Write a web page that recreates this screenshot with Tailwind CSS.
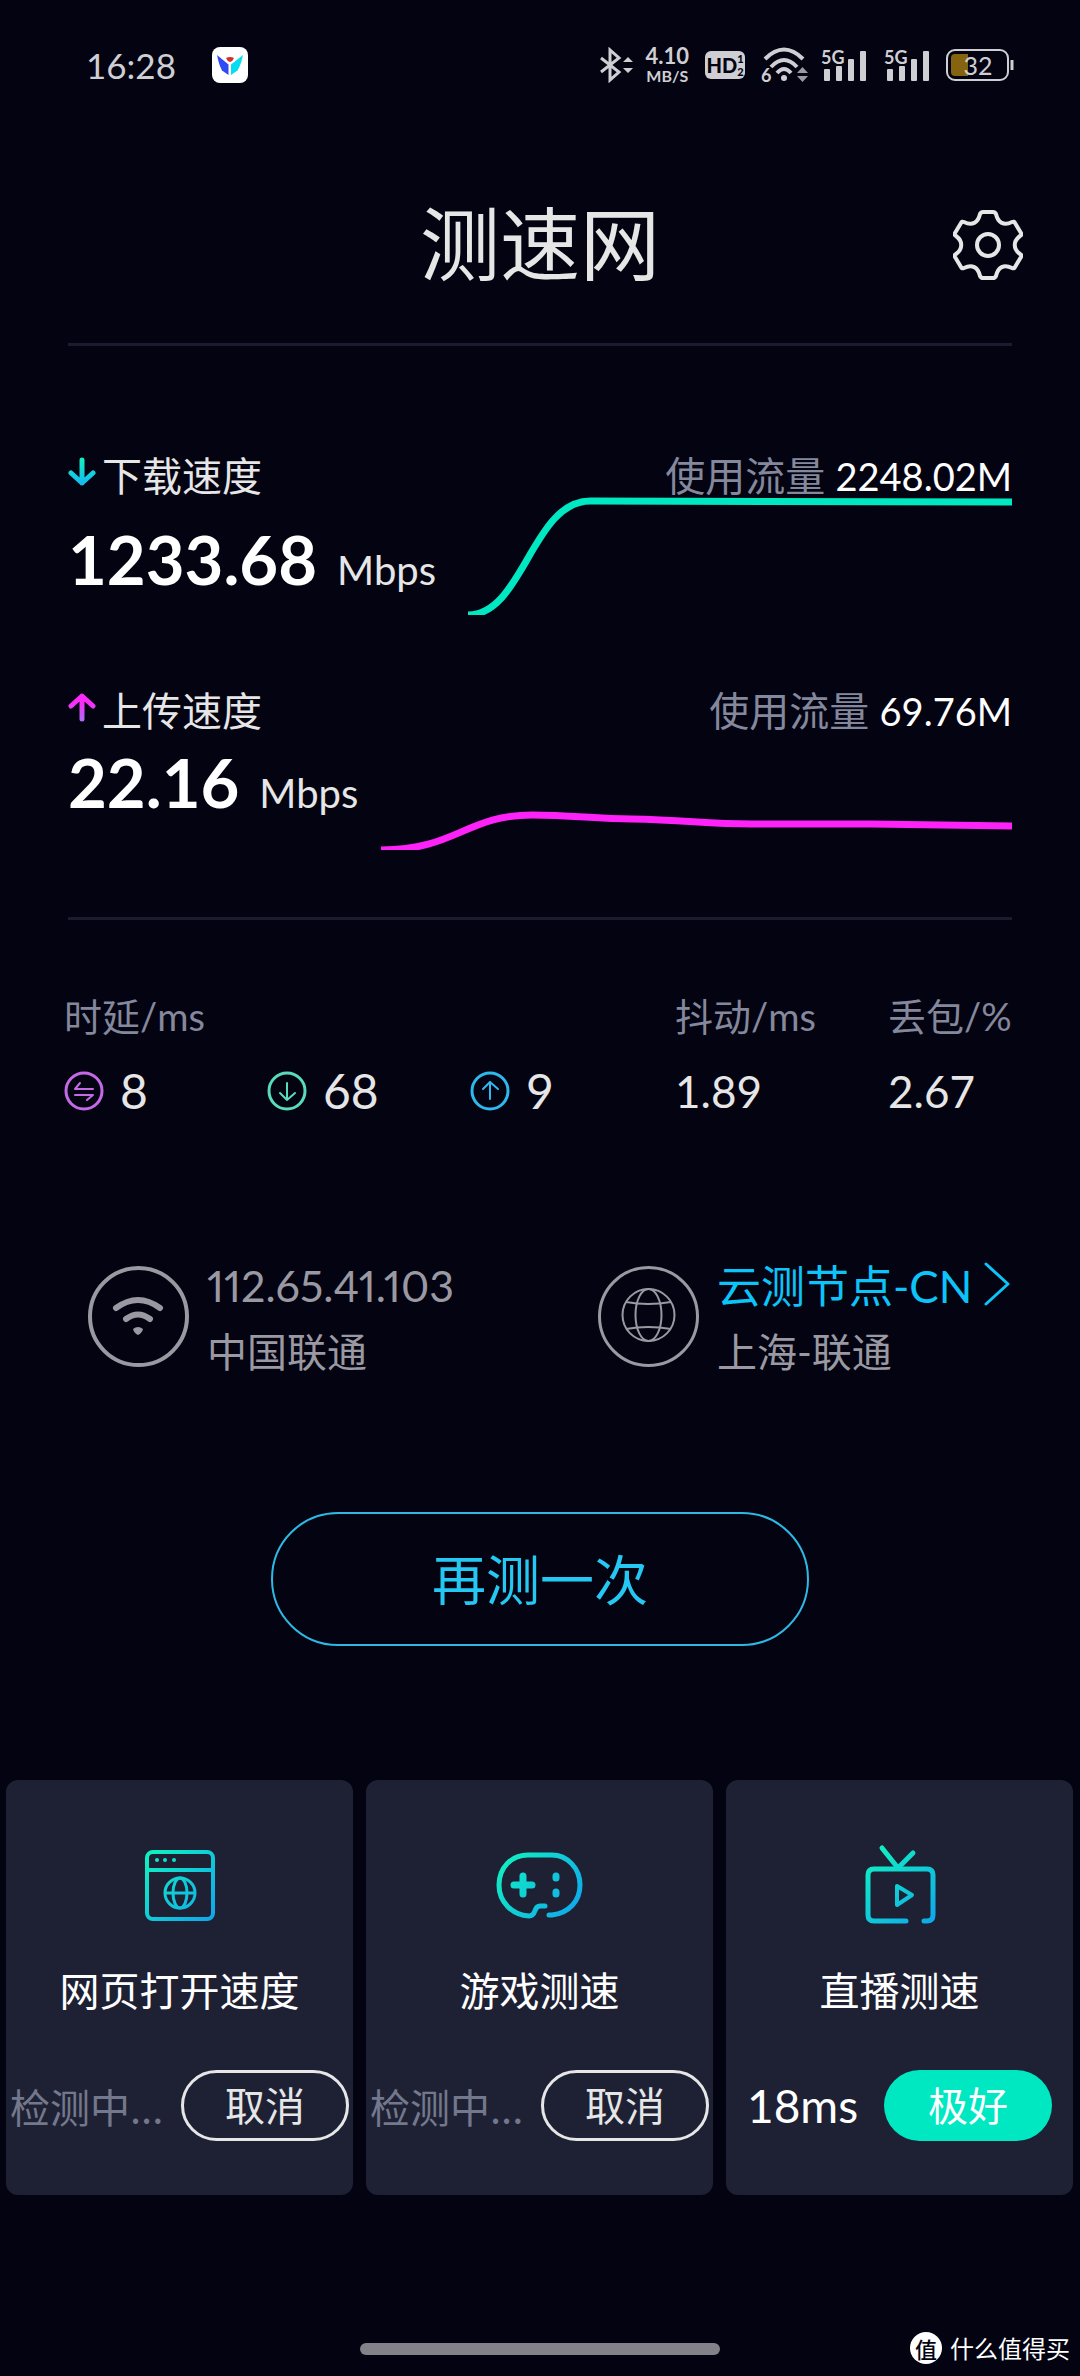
<!DOCTYPE html>
<html lang="zh-CN">
<head>
<meta charset="utf-8">
<meta name="viewport" content="width=device-width, initial-scale=1">
<title>测速网</title>
<script src="https://cdn.jsdelivr.net/npm/@tailwindcss/browser@4"></script>
</head>
<body class="relative min-h-screen bg-[#030312] font-['Lato','Noto_Sans_CJK_SC',sans-serif] text-[#e6e6e6]">

<!-- Status bar -->
<div class="flex h-[130px] items-center justify-between pr-[66px] pl-[86px] text-[#cfcfd3]">
  <div class="flex items-center gap-9">
    <span class="text-[35px] leading-10">16:28</span>
    <svg class="size-9" viewBox="0 0 36 36" aria-hidden="true">
      <rect width="36" height="36" rx="8" fill="#fff"/>
      <path d="M5 8 L16.500 17.500 V28 L10 23.500 Q7 18 5 8Z" fill="#2f49f5"/>
      <path d="M31 8 L19 17.500 V28 L25.500 23.500 Q29 18 31 8Z" fill="#06dcf0"/>
      <path d="M14 11 Q18 9 22 11 Q21 14 18 15 Q15 14 14 11Z" fill="#d3302b"/>
    </svg>
  </div>
  <div class="flex items-center">
    <svg class="mr-3 h-9 w-[34px]" viewBox="0 0 34 36" fill="none" stroke="currentColor" stroke-width="3" aria-hidden="true">
      <path d="M2 11 L20 25 L11 33 V3 L20 11 L2 25"/>
      <path d="M24 15 L29 10 L34 15Z M24 21 L29 26 L34 21Z" fill="currentColor" stroke="none"/>
    </svg>
    <div class="mr-4 flex flex-col items-center font-bold">
      <span class="text-[22px] leading-[22px]">4.10</span>
      <span class="text-[16px] leading-[18px]">MB/S</span>
    </div>
    <div class="mr-4 flex h-7 w-10 items-center justify-center rounded-md bg-[#cfcfd3] text-[#030312]">
      <span class="text-[20px] leading-6 font-black">HD</span>
      <span class="flex flex-col text-[11px] leading-[13px] font-black"><span>1</span><span>2</span></span>
    </div>
    <div class="relative mr-3 h-9 w-[48px]">
      <svg class="size-full" viewBox="0 0 48 36" fill="none" stroke="currentColor" stroke-width="4" aria-hidden="true">
        <path d="M4 12 Q23 -7 42 12 M10 20 Q23 6 36 20 M16 26 Q23 18 30 26"/>
        <circle cx="23" cy="31" r="3" fill="currentColor" stroke="none"/>
        <path d="M36 26 L41.500 20 L47 26Z M36 29 L41.500 35 L47 29Z" fill="#9a9aa2" stroke="none"/>
      </svg>
      <span class="absolute bottom-0 left-0 text-[18px] leading-4 font-bold">6</span>
    </div>
    <div class="relative mr-[17px] h-9 w-[46px]">
      <svg class="size-full" viewBox="0 0 46 36" fill="currentColor" aria-hidden="true">
        <rect x="3" y="22" width="6" height="12" rx="1"/><rect x="15" y="19" width="6" height="15" rx="1"/><rect x="27" y="12" width="6" height="22" rx="1"/><rect x="39" y="4" width="6" height="30" rx="1"/>
      </svg>
      <span class="absolute top-0 left-0 text-[18px] leading-5 font-bold">5G</span>
    </div>
    <div class="relative mr-4 h-9 w-[46px]">
      <svg class="size-full" viewBox="0 0 46 36" fill="currentColor" aria-hidden="true">
        <rect x="3" y="22" width="6" height="12" rx="1"/><rect x="15" y="19" width="6" height="15" rx="1"/><rect x="27" y="12" width="6" height="22" rx="1"/><rect x="39" y="4" width="6" height="30" rx="1"/>
      </svg>
      <span class="absolute top-0 left-0 text-[18px] leading-5 font-bold">5G</span>
    </div>
    <div class="relative h-8 w-[68px]">
      <svg class="size-full" viewBox="0 0 68 32" fill="none" aria-hidden="true">
        <rect x="1" y="1" width="61" height="30" rx="8" stroke="currentColor" stroke-width="2"/>
        <path d="M9 5 H22 V27 H9 Q5 27 5 23 V9 Q5 5 9 5Z" fill="#86640f"/>
        <path d="M66 11 V21" stroke="currentColor" stroke-width="3"/>
      </svg>
      <span class="absolute inset-0 pr-1 text-center text-[25px] leading-8">32</span>
    </div>
  </div>
</div>

<!-- Title -->
<header class="mt-20 grid grid-cols-[1fr_auto_1fr] items-start px-[57px]">
  <h1 class="col-start-2 font-['Noto_Sans_CJK_SC',sans-serif] text-[80px] leading-[58px]">测速网</h1>
  <button type="button" aria-label="设置" class="size-[70px] justify-self-end">
    <svg class="size-full" viewBox="0 0 70 70" fill="none" stroke="currentColor" stroke-width="4" stroke-linejoin="round">
      <path d="M27 4 Q28 2 30 2 H40 Q42 2 43 4 C45 13 51 16 59 12 Q61 11 62 13 L68 23 Q69 25 67 26 C60 31 60 39 67 44 Q69 45 68 47 L62 57 Q61 59 59 58 C51 54 45 57 43 66 Q42 68 40 68 H30 Q28 68 27 66 C25 57 19 54 11 58 Q9 59 8 57 L2 47 Q1 45 3 44 C10 39 10 31 3 26 Q1 25 2 23 L8 13 Q9 11 11 12 C19 16 25 13 27 4Z"/>
      <circle cx="35" cy="35" r="11"/>
    </svg>
  </button>
</header>

<main>
  <hr class="mx-[68px] mt-[63px] h-[3px] border-0 bg-[#1b1b2e]">

  <!-- Download -->
  <section class="mx-[68px] mt-[107px]">
    <div class="flex items-start justify-between text-[40px] leading-[46px]">
      <h2 class="flex gap-1.5">
        <svg class="mt-1 h-8 w-7" viewBox="0 0 28 32" fill="none" stroke="url(#down)" stroke-width="5" stroke-linecap="round" stroke-linejoin="round" aria-hidden="true">
          <defs><linearGradient id="down" gradientUnits="userSpaceOnUse" x1="0" y1="2" x2="0" y2="30"><stop stop-color="#12efc0"/><stop offset="1" stop-color="#14b5f5"/></linearGradient></defs>
          <path d="M14 3 V26 M3 16 L14 26 L25 16"/>
        </svg>下载速度</h2>
      <p class="text-[#84889c]">使用流量 <span class="text-[38px] text-white">2248.02M</span></p>
    </div>
    <div class="-mt-0.5 flex">
      <p class="flex w-[400px] shrink-0 items-baseline gap-5 pt-7 whitespace-nowrap"><span class="text-[67px] leading-[68px] font-bold text-white">1233.68</span><span class="text-[40px] leading-[68px]">Mbps</span></p>
      <svg class="h-[118px] min-w-0 flex-1" viewBox="0 0 543 118" preserveAspectRatio="none" fill="none" stroke="#00e8c2" stroke-width="7" role="img" aria-label="下载速度曲线">
        <path d="M0 118 C55 118 64 4 122 4 L543 5"/>
      </svg>
    </div>
  </section>

  <!-- Upload -->
  <section class="mx-[68px] mt-[73px]">
    <div class="flex items-start justify-between text-[40px] leading-[46px]">
      <h2 class="flex gap-1.5">
        <svg class="mt-1 h-8 w-7" viewBox="0 0 28 32" fill="none" stroke="url(#up)" stroke-width="5" stroke-linecap="round" stroke-linejoin="round" aria-hidden="true">
          <defs><linearGradient id="up" gradientUnits="userSpaceOnUse" x1="0" y1="2" x2="0" y2="30"><stop offset=".3" stop-color="#fb2bf8"/><stop offset="1" stop-color="#a673f4"/></linearGradient></defs>
          <path d="M14 27 V4 M3 14 L14 4 L25 14"/>
        </svg>上传速度</h2>
      <p class="text-[#84889c]">使用流量 <span class="text-[38px] text-white">69.76M</span></p>
    </div>
    <div class="-mt-0.5 flex">
      <p class="flex w-[313px] shrink-0 items-baseline gap-5 pt-4 whitespace-nowrap"><span class="text-[67px] leading-[68px] font-bold text-white">22.16</span><span class="text-[40px] leading-[68px]">Mbps</span></p>
      <svg class="h-[118px] min-w-0 flex-1" viewBox="0 0 630 118" preserveAspectRatio="none" fill="none" stroke="#fc22f8" stroke-width="7" role="img" aria-label="上传速度曲线">
        <path d="M0 118 C75 118 85 83 151 83 C190 83 215 87 250 87 C305 88 325 92 370 92 L490 92 L630 94"/>
      </svg>
    </div>
  </section>

  <hr class="mx-[68px] mt-[67px] h-[3px] border-0 bg-[#1b1b2e]">

  <!-- Latency, jitter, loss -->
  <dl class="mt-[76px] mr-[66px] ml-16 grid grid-cols-[203fr_203fr_205fr_213fr_126fr] gap-y-[30px]">
    <dt class="col-span-3 text-[38px] leading-10 text-[#84889c]">时延/ms</dt>
    <dt class="text-[38px] leading-10 text-[#84889c]">抖动/ms</dt>
    <dt class="text-[38px] leading-10 whitespace-nowrap text-[#84889c]">丢包/%</dt>
    <dd class="flex items-center gap-4 text-[48px] leading-[50px]">
      <svg class="size-10" viewBox="0 0 40 40" fill="none" stroke="#c56ae6" stroke-width="3" stroke-linecap="round" stroke-linejoin="round" aria-hidden="true"><circle cx="20" cy="20" r="18"/><path stroke-width="2" d="M16 12 L11 18 H29 M11 24 H29 L23 29"/></svg>8</dd>
    <dd class="flex items-center gap-4 text-[48px] leading-[50px]">
      <svg class="size-10" viewBox="0 0 40 40" fill="none" stroke="#58dcb9" stroke-width="3" stroke-linecap="round" stroke-linejoin="round" aria-hidden="true"><circle cx="20" cy="20" r="18"/><path stroke-width="2" d="M20 12 V29 M13 22 L20 29 L28 22"/></svg>68</dd>
    <dd class="flex items-center gap-4 text-[48px] leading-[50px]">
      <svg class="size-10" viewBox="0 0 40 40" fill="none" stroke="#2db9ec" stroke-width="3" stroke-linecap="round" stroke-linejoin="round" aria-hidden="true"><circle cx="20" cy="20" r="18"/><path stroke-width="2" d="M20 28 V11 M13 18 L20 11 L28 18"/></svg>9</dd>
    <dd class="text-[44px] leading-[50px]">1.89</dd>
    <dd class="text-[44px] leading-[50px]">2.67</dd>
  </dl>

  <!-- Connection -->
  <section class="mt-[146px] grid grid-cols-[510fr_482fr] pl-[88px] text-[#9a99a2]">
    <div class="flex items-start gap-[18px]">
      <svg class="mt-1 size-[101px] shrink-0" viewBox="0 0 101 101" fill="none" stroke="currentColor" stroke-linecap="round" aria-hidden="true">
        <circle cx="50.500" cy="50.500" r="48.500" stroke-width="4"/>
        <path stroke-width="6" d="M28 42 Q50 26 72 42 M38 53 Q50 44 62 53"/>
        <path d="M45 63 Q50 59 55 63 Q54 67 50 69 Q46 67 45 63Z" fill="currentColor" stroke="none"/>
      </svg>
      <div class="flex flex-col gap-5">
        <p class="text-[43px] leading-[48px] proportional-nums">112.65.41.103</p>
        <p class="text-[40px] leading-[44px]">中国联通</p>
      </div>
    </div>
    <div class="flex items-start gap-[18px]">
      <svg class="mt-1 size-[101px] shrink-0" viewBox="0 0 101 101" fill="none" stroke="currentColor" aria-hidden="true">
        <circle cx="50.500" cy="50.500" r="49" stroke-width="3"/>
        <g stroke-width="2"><circle cx="50.500" cy="49" r="26"/><ellipse cx="50.500" cy="49" rx="13" ry="26"/><path d="M28 36 Q50 40 73 36 M28 63 Q50 59 73 63"/></g>
      </svg>
      <div class="flex flex-col gap-5">
        <a href="#" class="flex items-start gap-3 text-[44px] leading-[48px] whitespace-nowrap text-[#0cc4f8]">云测节点-CN
          <svg class="h-11 w-[26px]" viewBox="0 0 26 44" fill="none" stroke="currentColor" stroke-width="3" stroke-linecap="round" stroke-linejoin="round" aria-hidden="true"><path d="M2 2 L24 22 L2 42"/></svg></a>
        <p class="text-[40px] leading-[44px]">上海-联通</p>
      </div>
    </div>
  </section>

  <div class="mt-[138px] flex justify-center">
    <button type="button" class="h-[134px] w-[538px] rounded-full border-2 border-[#2db9e4] pt-1 text-[54px] leading-[60px] text-[#24c8f2]">再测一次</button>
  </div>

  <!-- Scenario tests -->
  <section class="mt-[134px] grid grid-cols-3 gap-[13px] pr-[7px] pl-[6px]">
    <article class="flex flex-col items-center rounded-xl bg-[#1e2134] pt-[60px] pb-[54px]">
      <svg class="size-[90px]" viewBox="0 0 90 90" fill="none" stroke="url(#g1)" stroke-width="4" aria-hidden="true">
        <defs><linearGradient id="g1" gradientUnits="userSpaceOnUse" x1="15" y1="15" x2="75" y2="75"><stop stop-color="#10efc2"/><stop offset="1" stop-color="#10aaea"/></linearGradient></defs>
        <rect x="12" y="12" width="66" height="67" rx="6"/><path d="M12 30 H78"/>
        <g fill="url(#g1)" stroke="none"><circle cx="22" cy="20" r="2"/><circle cx="30" cy="20" r="2"/><circle cx="39" cy="20" r="2"/></g>
        <g stroke-width="3"><circle cx="45" cy="53" r="15"/><ellipse cx="45" cy="53" rx="7" ry="15"/><path d="M30 53 H60"/></g>
      </svg>
      <h3 class="mt-[38px] text-[40px] leading-[46px] text-white">网页打开速度</h3>
      <div class="mt-[56px] flex w-full items-center justify-between px-1">
        <span class="font-['Noto_Sans_CJK_SC',sans-serif] text-[40px] leading-[44px] text-[#74788c]">检测中...</span>
        <button type="button" class="h-[71px] w-[168px] rounded-full border-3 border-[#e6e6e6] text-[40px] leading-[44px]">取消</button>
      </div>
    </article>

    <article class="flex flex-col items-center rounded-xl bg-[#1e2134] pt-[60px] pb-[54px]">
      <svg class="size-[90px]" viewBox="0 0 90 90" fill="none" stroke="url(#g2)" stroke-width="5" stroke-linecap="round" stroke-linejoin="round" aria-hidden="true">
        <defs><linearGradient id="g2" gradientUnits="userSpaceOnUse" x1="10" y1="15" x2="80" y2="70"><stop stop-color="#10efc2"/><stop offset="1" stop-color="#10aaea"/></linearGradient></defs>
        <path d="M54 75 H57 C74 73 85 61 85 45 C85 28 72 15 57 15 H33 C16 15 4 28 4 45 C4 62 17 75 34 76 C42 76 38 66 45 66 H50"/>
        <path stroke-width="7" d="M28 36 V54 M19 45 H37"/>
        <path stroke-width="7" d="M61 36 V38 M61 52 V54"/>
      </svg>
      <h3 class="mt-[38px] text-[40px] leading-[46px] text-white">游戏测速</h3>
      <div class="mt-[56px] flex w-full items-center justify-between px-1">
        <span class="font-['Noto_Sans_CJK_SC',sans-serif] text-[40px] leading-[44px] text-[#74788c]">检测中...</span>
        <button type="button" class="h-[71px] w-[168px] rounded-full border-3 border-[#e6e6e6] text-[40px] leading-[44px]">取消</button>
      </div>
    </article>

    <article class="flex flex-col items-center rounded-xl bg-[#1e2134] pt-[60px] pb-[54px]">
      <svg class="size-[90px]" viewBox="0 0 90 90" fill="none" stroke="url(#g3)" stroke-width="5" stroke-linecap="round" stroke-linejoin="round" aria-hidden="true">
        <defs><linearGradient id="g3" gradientUnits="userSpaceOnUse" x1="18" y1="12" x2="75" y2="80"><stop stop-color="#10efc2"/><stop offset="1" stop-color="#10aaea"/></linearGradient></defs>
        <path d="M27 8 L43 28 L58 13"/>
        <path d="M51 81 H19 Q13 81 13 75 V35 Q13 29 19 29 H72 Q78 29 78 35 V75 Q78 81 72 81 H69"/>
        <path stroke-width="4" d="M42 46 L57 55 L42 65Z"/>
      </svg>
      <h3 class="mt-[38px] text-[40px] leading-[46px] text-white">直播测速</h3>
      <div class="mt-[56px] flex w-full items-center justify-between px-[21px] text-white">
        <span class="text-[46px] leading-[48px]">18ms</span>
        <button type="button" class="h-[71px] w-[168px] rounded-full bg-[#00e8c2] text-[40px] leading-[44px]">极好</button>
      </div>
    </article>
  </section>
</main>

<div class="mt-[148px] flex justify-center pb-[21px]">
  <div class="h-3 w-1/3 rounded-full bg-[#828288]"></div>
</div>

<div class="absolute right-[10px] bottom-3 flex items-center gap-2 font-['Noto_Sans_CJK_SC',sans-serif] text-white">
  <span class="flex size-8 items-center justify-center rounded-full bg-white text-[22px] leading-8 font-medium text-[#030312]">值</span>
  <span class="text-[24px] leading-8">什么值得买</span>
</div>
</body>
</html>
